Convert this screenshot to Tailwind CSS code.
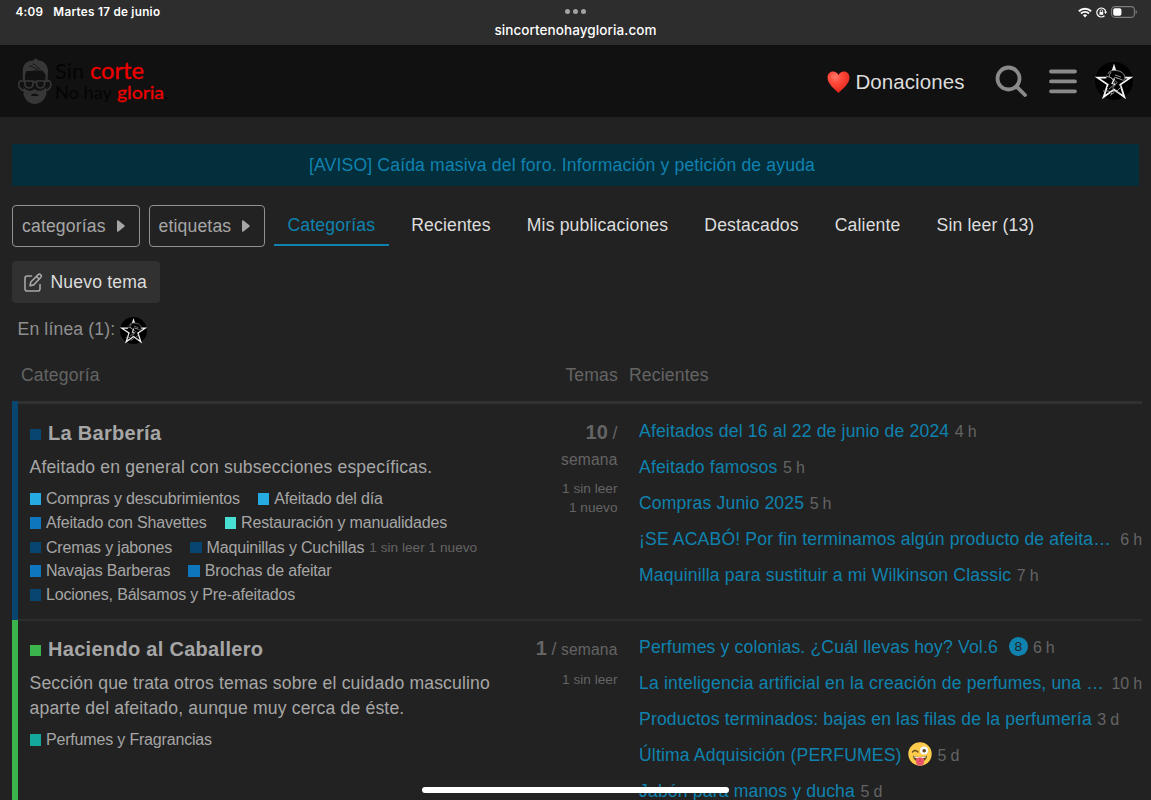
<!DOCTYPE html>
<html lang="es">
<head>
    <meta charset="UTF-8">
    <meta name="viewport" content="width=device-width, initial-scale=1.0">
    <title>Sin corte no hay gloria</title>
    <script src="https://cdn.jsdelivr.net/npm/@tailwindcss/browser@4"></script>
</head>
<body class="relative h-[800px] overflow-hidden bg-[#222222] font-['Liberation_Sans',Arial,sans-serif] text-[17.6px] leading-6 tracking-[0.155px] text-[#dddddd] whitespace-nowrap">

    <!-- Iconos reutilizados -->
    <svg class="hidden">
        <symbol id="avatar" viewBox="0 0 38 38">
            <circle cx="19" cy="19" r="19" fill="#000"/>
            <path d="M19 4.500l3.500 11.200h13L25.300 22.600l4 12.400L19 27.500 8.700 35l4-12.400L2.500 15.700h13z" fill="none" stroke="#f4f4f4" stroke-width="1.800"/>
            <path d="M12 14c1-4 4-6 9-6 5 .5 9 3 9 8 0 2-2 2-4 1l-6-2v11H12l3-4-4-5z" fill="#000"/>
            <path d="M13 12c1-3 4-4 8-3.500 5 .5 9 3 9 8 0 2-2 2-4 1l-5-2c-2-1-3 2-1 3l2 2-4 5 1 5-4 3M11 14l6 2 3 6-6 5M20 13l6 2M24 22l2 3-4 4 3 4M8 29h6l3 3M16 10l-2 4 4 4" fill="none" stroke="#9c9c9c" stroke-width="0.900"/>
            <path d="M19.500 16.500l-2.500 5 3 1" fill="none" stroke="#eee" stroke-width="1.200"/>
        </symbol>
    </svg>

    <div class="relative h-[45px] bg-[#2d2d2d] font-[Inter,sans-serif] text-white">
        <div class="flex h-6 items-center justify-between pl-[15.500px] pr-[14px] text-[11.700px] font-semibold leading-6 tracking-[0.28px]">
            <div class="flex gap-[10px]">
                <span>4:09</span>
                <span>Martes 17 de junio</span>
            </div>
            <div class="flex items-center gap-1">
                <svg class="h-[11px] w-[14px]" viewBox="0 0 14 11" fill="none" stroke="#fff" stroke-width="1.900">
                    <path d="M.9 4.200a8.700 8.700 0 0 1 12.200 0M3 6.500a5.700 5.700 0 0 1 8 0"/>
                    <path d="M4.900 8.300a3 3 0 0 1 4.200 0L7 10.500z" fill="#fff" stroke="none"/>
                </svg>
                <svg class="h-[11px] w-[11px]" viewBox="0 0 11 11" fill="none" stroke="#fff">
                    <path d="M8.500 8.700A4.500 4.500 0 1 1 9.800 5" stroke-width="1.200"/>
                    <path d="M8 4.800h3L9.600 7z" fill="#fff" stroke="none"/>
                    <rect x="3.500" y="5" width="3.700" height="2.800" fill="#fff" stroke="none"/>
                    <path d="M4.200 5V4a1.200 1.200 0 0 1 2.400 0v1" stroke-width=".8"/>
                </svg>
                <svg class="h-3 w-[26px]" viewBox="0 0 26 12">
                    <rect x=".6" y=".6" width="22.800" height="10.800" rx="3.400" fill="none" stroke="#7c7c7c" stroke-width="1.100"/>
                    <rect x="2.200" y="2.200" width="8.200" height="7.600" rx="1.800" fill="#fff"/>
                    <path d="M24.600 4v4q1.400-.6 1.400-2t-1.400-2" fill="#7c7c7c"/>
                </svg>
            </div>
        </div>
        <div class="absolute inset-x-0 top-[9px] flex justify-center gap-[3px]">
            <span class="size-[5px] rounded-full bg-[#a3a3a3]"></span>
            <span class="size-[5px] rounded-full bg-[#a3a3a3]"></span>
            <span class="size-[5px] rounded-full bg-[#a3a3a3]"></span>
        </div>
        <p class="absolute inset-x-0 top-[18px] text-center text-[13.500px] font-medium leading-6 tracking-[0.08px]">sincortenohaygloria.com</p>
    </div>

    <header class="flex h-[72px] items-center justify-between bg-[#111111] pl-[18px] pr-[18.500px]">
        <svg class="h-[50px] w-[150px]" viewBox="0 0 150 50" font-family="Lato, sans-serif">
            <!-- Cara con barba y gafas -->
            <g transform="translate(0 1.500)">
                <path d="M4.800 24.500V13.500C5 6 9 3.500 15 3l3-2.500 2 2.300c6 .7 9 4 10 9.500l-.5 12.500-2-1V17l-3-3.800c-7-1-12 .8-16 .3L7 17v7z" fill="#373737"/>
                <path d="M11 8.500c4 0 6 3 9 4M14.500 6.500c3 0 5 3.500 8 6" stroke="#111" fill="none"/>
                <path d="M4.500 24C1 21.500-.3 27 1.500 30c1.200 2 3 3 4.800 3M29 24c3.500-2.500 4.800 3 3 6-1.200 2-3 3-4.800 3" stroke="#373737" stroke-width="1.600" fill="none"/>
                <path d="M5.500 29.500c3 4.500 8 4.500 11.200 2 3.300 2.500 8.300 2.500 11.600-2V37c-1.300 5-6 9.500-11.600 9.500S6.800 42 5.500 37z" fill="#373737"/>
                <path d="M12.500 38c2-2.500 6.500-2.500 8.500 0-2 .8-6.500.8-8.500 0z" fill="#111"/>
                <g fill="#111" stroke="#373737" stroke-width="1.700">
                    <path d="M6.500 23.500h8.500v3a4 4 0 0 1-8 0zM18.500 23.500H27l-.5 3a4 4 0 0 1-8 0zM15 25q1.800-1 3.500 0"/>
                </g>
            </g>
            <g letter-spacing="0" fill="#040404">
                <text x="37" y="22.500" font-size="22" textLength="29" lengthAdjust="spacingAndGlyphs">Sin</text>
                <text x="72" y="22.500" font-size="23" textLength="54" lengthAdjust="spacingAndGlyphs" fill="#ee0000" stroke="#ee0000" stroke-width=".3">corte</text>
                <text x="37" y="42.500" font-size="18" textLength="57" lengthAdjust="spacingAndGlyphs">No hay</text>
                <text x="99" y="42.500" font-size="18" textLength="47" lengthAdjust="spacingAndGlyphs" fill="#ee0000" stroke="#ee0000" stroke-width=".3">gloria</text>
                <text x="146" y="42.500" font-size="18">.</text>
            </g>
        </svg>
        <div class="flex items-center">
            <svg class="mt-px h-[22px] w-[23px]" viewBox="0 0 23 22">
                <defs>
                    <radialGradient id="heart" cx=".35" cy=".25" r=".8">
                        <stop offset="0" stop-color="#ff7a68"/>
                        <stop offset=".35" stop-color="#ff4a3c"/>
                        <stop offset="1" stop-color="#e02418"/>
                    </radialGradient>
                </defs>
                <path d="M11.500 22C8 18.500.5 13 .5 6.500.5 3 3 .5 6 .5c2.500 0 4.500 1.500 5.500 3.500 1-2 3-3.500 5.500-3.500 3 0 5.500 2.500 5.500 6 0 6.500-7.500 12-11 15.500z" fill="url(#heart)"/>
            </svg>
            <a href="#" class="ml-[5.500px] pt-px text-[20.500px] tracking-[0.080px]">Donaciones</a>
            <svg class="ml-[30px] size-8" viewBox="0 0 32 32" fill="none" stroke="#8a8a8a" stroke-width="3.800" stroke-linecap="round">
                <circle cx="13.500" cy="13.500" r="11"/>
                <path d="M21.800 21.800l8.200 8.200"/>
            </svg>
            <svg class="ml-[22px] h-[26px] w-7" viewBox="0 0 28 26" stroke="#8a8a8a" stroke-width="3.800" stroke-linecap="round">
                <path d="M2 3.500h24M2 13.400h24M2 23.300h24"/>
            </svg>
            <svg class="ml-[18px] size-[38px]"><use href="#avatar"/></svg>
        </div>
    </header>

    <main class="pl-3">
        <div class="mt-[27px] mr-3 h-[42px] bg-[#032e3c] pr-[27px] text-center leading-[43px]">
            <a href="#" class="text-[#0f82af]">[AVISO] Caída masiva del foro. Información y petición de ayuda</a>
        </div>

        <nav class="mt-[19px] flex h-[42px] gap-[9px]">
            <button class="flex w-[127.500px] items-center justify-between rounded border border-[#919191] pl-[9px] pr-[14px] text-[#a6a6a6]">
                categorías
                <svg class="h-3 w-2" viewBox="0 0 8 12" fill="#a6a6a6"><path d="M0 1.200Q0-.5 1.400.6L7.400 5.300q.7.700 0 1.400L1.400 11.400Q0 12.500 0 10.800z"/></svg>
            </button>
            <button class="flex w-[116.500px] items-center justify-between rounded border border-[#919191] pl-[9px] pr-[14px] text-[#a6a6a6]">
                etiquetas
                <svg class="h-3 w-2" viewBox="0 0 8 12" fill="#a6a6a6"><path d="M0 1.200Q0-.5 1.400.6L7.400 5.300q.7.700 0 1.400L1.400 11.400Q0 12.500 0 10.800z"/></svg>
            </button>
            <div class="flex h-[41px] gap-[9px] leading-10">
                <a href="#" class="border-b-2 border-[#0f82af] px-[13.500px] text-[#0f82af]">Categorías</a>
                <a href="#" class="px-[13.500px]">Recientes</a>
                <a href="#" class="px-[13.500px]">Mis publicaciones</a>
                <a href="#" class="px-[13.500px]">Destacados</a>
                <a href="#" class="px-[13.500px]">Caliente</a>
                <a href="#" class="px-[13.500px]">Sin leer (13)</a>
            </div>
        </nav>

        <button class="mt-[14px] flex h-[42px] w-[148px] items-center rounded bg-[#313131] pl-3">
            <svg class="size-[19px]" viewBox="0 0 19 19" fill="none" stroke="#a6a6a6" stroke-width="1.600" stroke-linecap="round" stroke-linejoin="round">
                <path d="M7.500 3H3.300Q1 3 1 5.300v10.400Q1 18 3.300 18h10.400q2.300 0 2.300-2.300V11.500"/>
                <path d="M6 12.800l.8-3.800 7.400-7.400q1.200-1 2.500.2t.2 2.500L9.700 11.900zM12.500 3.500L15.200 6.200"/>
            </svg>
            <span class="ml-[7.500px]">Nuevo tema</span>
        </button>

        <div class="mt-[13px] flex h-7 items-center pl-[5.500px] text-[#8f8f8f]">
            <span class="pb-0.5">En línea (1):</span>
            <svg class="ml-[5px] size-[27px]"><use href="#avatar"/></svg>
        </div>

        <section class="mt-[19px]">
            <div class="flex h-[38px] text-[#646464]">
                <span class="w-[606px] pl-[9px]">
                    <span class="flex justify-between"><span>Categoría</span><span>Temas</span></span>
                </span>
                <span class="ml-[11px]">Recientes</span>
            </div>

            <div class="flex h-[219px]">
                <div class="w-[6px] bg-[#08456f]"></div>
                <div class="mr-[9px] flex flex-1 border-t-[3px] border-[#313131] pt-[15px]">
                    <div class="w-[500px] pl-[11.500px] text-[#a6a6a6]">
                        <h3 class="flex h-7 items-center text-[20px] font-bold tracking-[0.3px]"><i class="mt-[3px] mr-[7px] size-[11.500px] bg-[#08456f]"></i>La Barbería</h3>
                        <p class="mt-2 leading-[25px]">Afeitado en general con subsecciones específicas.</p>
                        <div class="mt-[7px] text-[16px] tracking-[-0.180px]">
                            <div class="flex gap-[18px]">
                                <a class="flex items-center gap-[5px]"><i class="size-[11.500px] bg-[#25aae2]"></i>Compras y descubrimientos</a>
                                <a class="flex items-center gap-[5px]"><i class="size-[11.500px] bg-[#25aae2]"></i>Afeitado del día</a>
                            </div>
                            <div class="flex gap-[18px]">
                                <a class="flex items-center gap-[5px]"><i class="size-[11.500px] bg-[#0e76bd]"></i>Afeitado con Shavettes</a>
                                <a class="flex items-center gap-[5px]"><i class="size-[11.500px] bg-[#46dfd2]"></i>Restauración y manualidades</a>
                            </div>
                            <div class="flex gap-[18px]">
                                <a class="flex items-center gap-[5px]"><i class="size-[11.500px] bg-[#08456f]"></i>Cremas y jabones</a>
                                <a class="flex items-center gap-[5px]"><i class="size-[11.500px] bg-[#08456f]"></i>Maquinillas y Cuchillas <span class="pt-px text-[13.600px] tracking-[0.030px] text-[#646464]">1 sin leer 1 nuevo</span></a>
                            </div>
                            <div class="-mt-px flex gap-[18px]">
                                <a class="flex items-center gap-[5px]"><i class="size-[11.500px] bg-[#0e76bd]"></i>Navajas Barberas</a>
                                <a class="flex items-center gap-[5px]"><i class="size-[11.500px] bg-[#0e76bd]"></i>Brochas de afeitar</a>
                            </div>
                            <a class="flex items-center gap-[5px]"><i class="size-[11.500px] bg-[#08456f]"></i>Lociones, Bálsamos y Pre-afeitados</a>
                        </div>
                    </div>
                    <div class="w-[99.500px] text-right text-[#646464]">
                        <p class="text-[15.600px] leading-[26px]"><b class="text-[20px]">10</b> <span class="text-[17.600px]">/</span><br>semana</p>
                        <p class="mt-[6px] text-[13.600px] leading-[19px] tracking-[0.030px]">1 sin leer<br>1 nuevo</p>
                    </div>
                    <div class="ml-[21.500px] flex-1 -mt-px text-[#0f82af]">
                        <div class="flex h-9 gap-[5.500px] leading-[26px]"><a href="#">Afeitados del 16 al 22 de junio de 2024</a><span class="pt-px text-[16px] tracking-[-0.180px] text-[#646464]">4 h</span></div>
                        <div class="flex h-9 gap-[5.500px] leading-[26px]"><a href="#">Afeitado famosos</a><span class="pt-px text-[16px] tracking-[-0.180px] text-[#646464]">5 h</span></div>
                        <div class="flex h-9 gap-[5.500px] leading-[26px]"><a href="#">Compras Junio 2025</a><span class="pt-px text-[16px] tracking-[-0.180px] text-[#646464]">5 h</span></div>
                        <div class="flex h-9 justify-between leading-[26px]"><a href="#">¡SE ACABÓ! Por fin terminamos algún producto de afeita…</a><span class="pt-px text-[16px] tracking-[-0.180px] text-[#646464]">6 h</span></div>
                        <div class="flex h-9 gap-[5.500px] leading-[26px]"><a href="#">Maquinilla para sustituir a mi Wilkinson Classic</a><span class="pt-px text-[16px] tracking-[-0.180px] text-[#646464]">7 h</span></div>
                    </div>
                </div>
            </div>

            <div class="flex h-[219px]">
                <div class="w-[6px] bg-[#3bb54b]"></div>
                <div class="mr-[9px] -mt-px flex flex-1 border-t-2 border-[#2d2d2d] pt-[14px]">
                    <div class="w-[500px] pl-[11.500px] text-[#a6a6a6]">
                        <h3 class="flex h-7 items-center text-[20px] font-bold tracking-[0.3px]"><i class="mt-[3px] mr-[7px] size-[11.500px] bg-[#3bb54b]"></i>Haciendo al Caballero</h3>
                        <p class="mt-2 leading-[25px]">Sección que trata otros temas sobre el cuidado masculino<br>aparte del afeitado, aunque muy cerca de éste.</p>
                        <a class="mt-[7px] flex items-center gap-[5px] text-[16px] tracking-[-0.180px]"><i class="size-[11.500px] bg-[#14a89d]"></i>Perfumes y Fragrancias</a>
                    </div>
                    <div class="w-[99.500px] text-right text-[#646464]">
                        <p class="text-[15.600px] leading-[27px]"><b class="text-[20px]">1</b> <span class="text-[17.600px]">/</span> semana</p>
                        <p class="mt-[7px] text-[13.600px] leading-[19px] tracking-[0.030px]">1 sin leer</p>
                    </div>
                    <div class="ml-[21.500px] flex-1 -mt-px text-[#0f82af]">
                        <div class="flex h-9 leading-[26px]"><a href="#">Perfumes y colonias. ¿Cuál llevas hoy? Vol.6</a><span class="mt-[3px] ml-[11px] size-[19px] rounded-full bg-[#0f82af] text-center text-[13.600px] leading-[19px] tracking-normal text-[#222222]">8</span><span class="ml-[5px] pt-px text-[16px] tracking-[-0.180px] text-[#646464]">6 h</span></div>
                        <div class="flex h-9 justify-between leading-[26px]"><a href="#">La inteligencia artificial en la creación de perfumes, una …</a><span class="pt-px text-[16px] tracking-[-0.180px] text-[#646464]">10 h</span></div>
                        <div class="flex h-9 gap-[5.500px] leading-[26px]"><a href="#">Productos terminados: bajas en las filas de la perfumería</a><span class="pt-px text-[16px] tracking-[-0.180px] text-[#646464]">3 d</span></div>
                        <div class="flex h-9 gap-[6px] leading-[26px]">
                            <a href="#">Última Adquisición (PERFUMES)</a>
                            <svg class="size-6" viewBox="0 0 24 24">
                                <circle cx="12" cy="12" r="11.700" fill="#ffcb4c"/>
                                <path d="M5 13.500q7 3 14 0 0 6-7 6t-7-6z" fill="#65471b"/>
                                <path d="M6 14.200q6 2.200 12 0l-.3 1.300q-5.700 1.300-11.400 0z" fill="#fff"/>
                                <path d="M8 16.500q4-2 8 0v3.500q0 3.500-4 3.500t-4-3.500z" fill="#e8596e"/>
                                <path d="M12 16v4" stroke="#dd2f45" stroke-width=".8"/>
                                <path d="M4.500 10q2.500-3 5.500 0" fill="none" stroke="#65471b" stroke-width="1.300" stroke-linecap="round"/>
                                <circle cx="16" cy="8.500" r="4" fill="#f5f8fa"/>
                                <circle cx="16.200" cy="8.800" r="1.800" fill="#65471b"/>
                            </svg>
                            <span class="pt-px text-[16px] tracking-[-0.180px] text-[#646464]">5 d</span>
                        </div>
                        <div class="flex h-9 gap-[5.500px] leading-[26px]"><a href="#">Jabón para manos y ducha</a><span class="pt-px text-[16px] tracking-[-0.180px] text-[#646464]">5 d</span></div>
                    </div>
                </div>
            </div>
        </section>
    </main>

    <!-- Indicador de inicio del sistema -->
    <div class="absolute left-[422px] top-[787px] h-[6px] w-[307px] rounded-full bg-white"></div>
</body>
</html>
